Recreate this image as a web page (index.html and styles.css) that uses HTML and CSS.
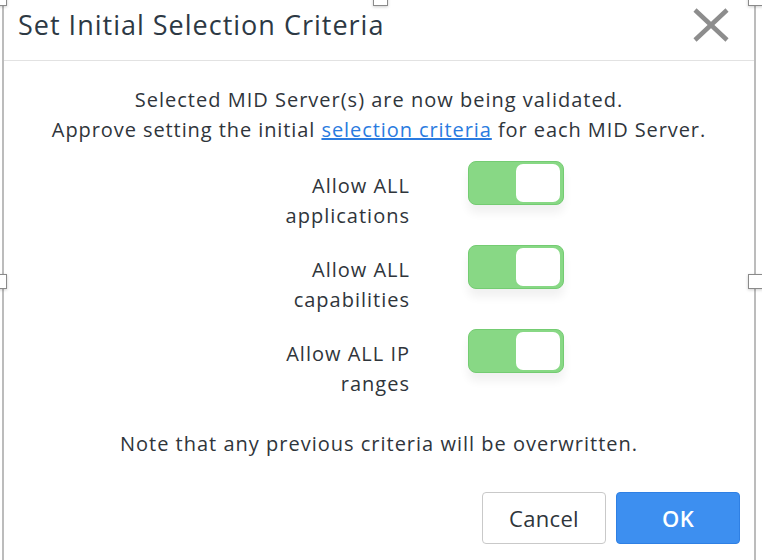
FILE: index.html
```
<!DOCTYPE html>
<html>
<head>
    <meta charset="UTF-8">
    <meta name="viewport" content="width=device-width, initial-scale=1.0">
    <title>Set Initial Selection Criteria</title>
    <link rel="stylesheet" href="styles.css">
</head>
<body>
<!-- Dialog with resize handles -->
<div class="dialog">
    <span class="handle h-tl"></span>
    <span class="handle h-tc"></span>
    <span class="handle h-tr"></span>
    <span class="handle h-ml"></span>
    <span class="handle h-mr"></span>

    <div class="dialog-header">
        <h1 class="dialog-title">Set Initial Selection Criteria</h1>
        <button class="close-btn" aria-label="Close">
            <svg width="38" height="34" viewBox="0 0 38 34">
                <path d="M3 2 L35 32 M35 2 L3 32" stroke="#8d8d8d" stroke-width="4.5" fill="none"/>
            </svg>
        </button>
    </div>

    <div class="dialog-body">
        <p class="intro">
            Selected MID Server(s) are now being validated.<br>
            <span class="intro-2">Approve setting the initial <a href="#">selection criteria</a> for each MID Server.</span>
        </p>

        <div class="criteria">
            <div class="row">
                <label class="row-label">Allow ALL applications</label>
                <span class="toggle on"><span class="knob"></span></span>
            </div>
            <div class="row">
                <label class="row-label">Allow ALL capabilities</label>
                <span class="toggle on"><span class="knob"></span></span>
            </div>
            <div class="row">
                <label class="row-label">Allow ALL IP ranges</label>
                <span class="toggle on"><span class="knob"></span></span>
            </div>
        </div>

        <p class="note">Note that any previous criteria will be overwritten.</p>
    </div>

    <div class="dialog-footer">
        <button class="btn btn-cancel">Cancel</button>
        <button class="btn btn-ok">OK</button>
    </div>
</div>
</body>
</html>
```

FILE: styles.css
```
html, body {
    margin: 0;
    height: 100%;
    background: #fff;
    overflow: hidden;
}

body {
    font-family: "Open Sans", Lato, sans-serif;
    color: #2f353b;
}

/* Dialog frame */
.dialog {
    position: relative;
    margin-left: 2px;
    width: 750px;
    height: 560px;
    border-left: 2px solid #bcbcbc;
    border-right: 2px solid #bcbcbc;
    display: flex;
    flex-direction: column;
}

/* Little resize handles sitting on the frame */
.handle {
    position: absolute;
    width: 13px;
    height: 13px;
    background: #fff;
    border: 1px solid #8a8a8a;
    box-shadow: 0 1px 3px rgba(0,0,0,0.2);
}
.h-tl { left: -12px; top: -9px; }
.h-tc { left: 369px; top: -9px; }
.h-tr { right: -9px; top: -9px; }
.h-ml { left: -12px; top: 274px; }
.h-mr { right: -9px; top: 274px; }

/* Header */
.dialog-header {
    height: 60px;
    display: flex;
    align-items: center;
    justify-content: space-between;
    padding: 0 24px 0 14px;
    border-bottom: 1px solid #e2e2e2;
}

.dialog-title {
    margin: -11px 0 0;
    font-size: 27px;
    font-weight: 400;
    letter-spacing: 1px;
    color: #2d3944;
}

.close-btn {
    border: none;
    background: none;
    padding: 0;
    margin-top: -8px;
    cursor: pointer;
}

/* Body */
.dialog-body {
    padding-top: 24px;
    font-size: 20px;
    line-height: 30px;
    letter-spacing: 1px;
}

.intro {
    margin: 0;
    text-align: center;
}

.intro-2 {
    letter-spacing: 0.92px;
}

.intro a {
    color: #2a7be0;
    text-decoration: underline;
}

.criteria {
    margin-top: 16px;
    padding-left: 246px;
}

.row {
    display: flex;
    height: 84px;
}

.row-label {
    width: 160px;
    margin-top: 10px;
    text-align: right;
}

.toggle {
    margin-left: 58px;
    width: 96px;
    height: 44px;
    box-sizing: border-box;
    border-radius: 8px;
    background: #88d885;
    border: 1px solid #74cc72;
    display: flex;
    justify-content: flex-end;
    align-items: center;
    padding-right: 3px;
    box-shadow: 0 8px 10px rgba(0,0,0,0.06);
}

.knob {
    width: 44px;
    height: 38px;
    background: #fff;
    border-radius: 7px;
}

.note {
    margin: 16px 0 0;
    text-align: center;
}

/* Footer buttons */
.dialog-footer {
    margin-top: auto;
    display: flex;
    justify-content: flex-end;
    gap: 10px;
    padding: 0 14px 16px 0;
}

.btn {
    width: 124px;
    height: 52px;
    border-radius: 4px;
    font-family: "Open Sans", Lato, sans-serif;
    font-size: 22px;
    letter-spacing: 0.3px;
    cursor: pointer;
}

.btn-cancel {
    background: #fff;
    border: 1px solid #c9c9c9;
    color: #2f353b;
}

.btn-ok {
    background: #3d8ff0;
    border: 1px solid #2f80e4;
    color: #fff;
    font-weight: 600;
}
```
